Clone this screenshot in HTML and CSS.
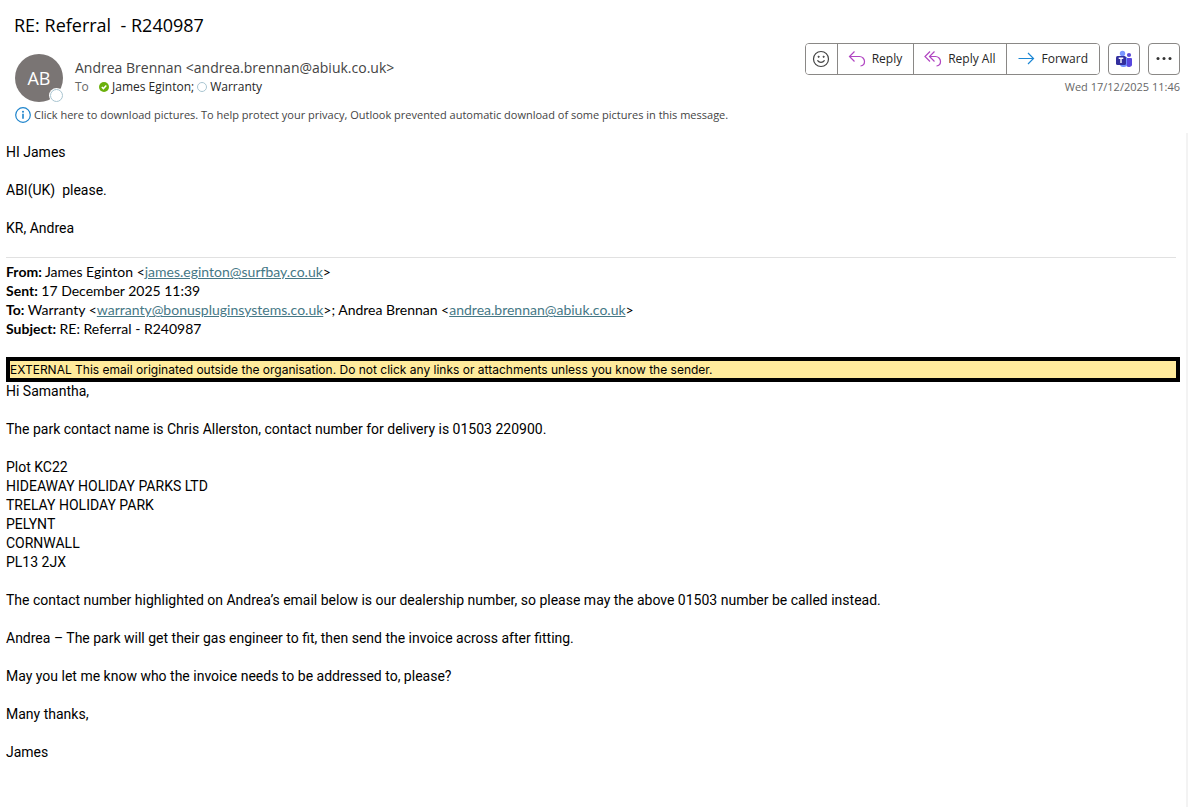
FILE: index.html
```html
<!DOCTYPE html>
<html lang="en-GB">
<head>
<meta charset="utf-8">
<title>RE: Referral - R240987</title>
<link rel="stylesheet" href="styles.css">
</head>
<body>
<main class="message">
  <header class="head">
    <h1 class="subject">RE: Referral&nbsp; - R240987</h1>
    <div class="head-row">
      <div class="avatar">AB<span class="avatar-status"></span></div>
      <div class="people">
        <div class="sender">Andrea Brennan &lt;andrea.brennan@abiuk.co.uk&gt;</div>
        <div class="recipients">
          <span class="to-label">To</span>
          <svg class="presence" viewBox="0 0 10 10" aria-hidden="true"><circle cx="5" cy="5" r="5" fill="#6bb00c"/><path d="M2.8 5l1.6 1.6 2.9-3" fill="none" stroke="#fff" stroke-width="1.5"/></svg>
          <span class="recipient">James Eginton;</span>
          <svg class="presence" viewBox="0 0 10 10" aria-hidden="true"><circle cx="5" cy="5" r="4.5" fill="#fff" stroke="#a9c5d1"/></svg>
          <span class="recipient">Warranty</span>
        </div>
      </div>
      <div class="side">
        <div class="actions">
          <div class="group">
            <button class="btn btn-icon" aria-label="React"><svg width="18" height="18" viewBox="0 0 18 18" fill="none" stroke="#444" stroke-width="1.2" stroke-linecap="round"><circle cx="9" cy="9" r="7.5"/><path d="M5.7 10.7c1.500 2.200 5.100 2.200 6.600 0"/><circle cx="6.500" cy="6.800" r=".6" fill="#444" stroke-width=".8"/><circle cx="11.500" cy="6.800" r=".6" fill="#444" stroke-width=".8"/></svg></button>
            <button class="btn btn-labelled"><svg width="18" height="18" viewBox="0 0 18 18" fill="none" stroke="#b146c2" stroke-width="1.2"><path d="M6.500 1.500L1.500 6.500l5 5M1.500 6.500H11.500a5 5 0 0 1 5 5a4.500 4.500 0 0 1-4 4.500"/></svg>Reply</button>
            <button class="btn btn-labelled"><svg width="18" height="18" viewBox="0 0 18 18" fill="none" stroke="#b146c2" stroke-width="1.2"><path d="M6 1.500L1 6.500l5 5M10.500 1.500L5.500 6.500l5 5M5.500 6.500h6a5 5 0 0 1 5 5a4.500 4.500 0 0 1-4 4.500"/></svg>Reply All</button>
            <button class="btn btn-labelled"><svg width="18" height="18" viewBox="0 0 18 18" fill="none" stroke="#1c87d4" stroke-width="1.2"><path d="M1.500 8.500h15M11 3l5.500 5.500L11 14"/></svg>Forward</button>
          </div>
          <button class="btn btn-square" aria-label="Share to Teams"><svg width="18" height="18" viewBox="0 0 18 18"><circle cx="7.500" cy="3.500" r="2.700" fill="#7b96ff"/><circle cx="14" cy="5" r="2.100" fill="#5b4bd6"/><path d="M11 8h5a1 1 0 0 1 1 1v4.500a3 3 0 0 1-6 1z" fill="#5847df"/><path d="M5 7h7v7a3 3 0 0 1-3 3H8a3 3 0 0 1-3-3z" fill="#6f8cff"/><rect x="1" y="6" width="10" height="9" rx="1.500" fill="#322f9e"/><path d="M3.700 8.300h4.600M6 8.300v4.700" stroke="#fff" stroke-width="1.400"/></svg></button>
          <button class="btn btn-square" aria-label="More actions"><svg width="18" height="18" viewBox="0 0 18 18" fill="#333"><circle cx="3" cy="8.500" r="1.500"/><circle cx="9" cy="8.500" r="1.500"/><circle cx="15" cy="8.500" r="1.500"/></svg></button>
        </div>
        <time class="date" datetime="2025-12-17T11:46">Wed 17/12/2025 11:46</time>
      </div>
    </div>
    <div class="info">
      <svg width="16" height="16" viewBox="0 0 16 16" aria-hidden="true"><circle cx="8" cy="8" r="7.300" fill="none" stroke="#1e84cc" stroke-width="1.200"/><circle cx="8" cy="4.700" r="1" fill="#1e84cc"/><path d="M8 6.800v5" stroke="#1e84cc" stroke-width="1.600"/></svg>
      <span>Click here to download pictures. To help protect your privacy, Outlook prevented automatic download of some pictures in this message.</span>
    </div>
  </header>
  <article class="body">
    <p>HI James</p>
    <p>ABI(UK)&nbsp; please.</p>
    <p>KR, Andrea</p>
    <section class="quoted">
      <p><b>From:</b> James Eginton &lt;<a href="mailto:james.eginton@surfbay.co.uk">james.eginton@surfbay.co.uk</a>&gt;<br>
      <b>Sent:</b> 17 December 2025 11:39<br>
      <b>To:</b> Warranty &lt;<a href="mailto:warranty@bonuspluginsystems.co.uk">warranty@bonuspluginsystems.co.uk</a>&gt;; Andrea Brennan &lt;<a href="mailto:andrea.brennan@abiuk.co.uk">andrea.brennan@abiuk.co.uk</a>&gt;<br>
      <b>Subject:</b> RE: Referral - R240987</p>
    </section>
    <div class="external">EXTERNAL This email originated outside the organisation. Do not click any links or attachments unless you know the sender.</div>
    <p>Hi Samantha,</p>
    <p>The park contact name is Chris Allerston, contact number for delivery is 01503 220900.</p>
    <p>Plot KC22<br>HIDEAWAY HOLIDAY PARKS LTD<br>TRELAY HOLIDAY PARK<br>PELYNT<br>CORNWALL<br>PL13 2JX</p>
    <p>The contact number highlighted on Andrea’s email below is our dealership number, so please may the above 01503 number be called instead.</p>
    <p>Andrea – The park will get their gas engineer to fit, then send the invoice across after fitting.</p>
    <p>May you let me know who the invoice needs to be addressed to, please?</p>
    <p>Many thanks,</p>
    <p>James</p>
  </article>
</main>
</body>
</html>
```
FILE: styles.css
```css
* { box-sizing: border-box; }
body { margin: 0; background: #fff; color: #000; }
.message { display: flex; flex-direction: column; min-height: 100vh; font-family: "Open Sans", sans-serif; }
.head { padding: 12px 8px 0 14px; }
.subject { margin: 0; font-size: 18px; line-height: 26px; font-weight: 400; }
.head-row { display: flex; align-items: flex-start; padding-top: 5px; }
.avatar { position: relative; width: 48px; height: 48px; margin: 11px 12px 0 1px; border-radius: 50%; background: #7a7574; color: #fff; font-size: 18px; line-height: 48px; text-align: center; }
.avatar-status { position: absolute; right: 0; bottom: 0; width: 13px; height: 13px; border: 1px solid #a9c5d1; border-radius: 50%; background: #fff; box-shadow: 0 0 0 1px #fff; }
.people { flex: 1; padding-top: 15px; color: #444; }
.sender { font-size: 14px; line-height: 20px; }
.recipients { display: flex; align-items: center; font-size: 12px; line-height: 18px; }
.to-label { width: 24px; color: #666; }
.presence { width: 10px; height: 10px; margin-right: 3px; }
.recipient { margin-right: 3px; color: #262626; }
.side { display: flex; flex-direction: column; align-items: flex-end; }
.actions { display: flex; gap: 8px; }
.group { display: flex; border: 1px solid #8a8886; border-radius: 4px; }
.btn { display: flex; align-items: center; height: 30px; padding: 0; border: 0; background: #fff; color: #262626; font-family: inherit; font-size: 12px; line-height: 18px; }
.group .btn + .btn { border-left: 1px solid #8a8886; }
.group .btn:first-child { border-radius: 3px 0 0 3px; }
.group .btn:last-child { border-radius: 0 3px 3px 0; }
.btn-icon { width: 31px; justify-content: center; }
.btn-labelled { padding: 0 11px 0 10px; gap: 6px; }
.btn-square { width: 32px; height: 32px; justify-content: center; border: 1px solid #8a8886; border-radius: 4px; }
.date { margin-top: 3px; font-size: 11px; line-height: 18px; color: #666; }
.info { display: flex; align-items: center; gap: 3px; padding: 5px 1px 0; font-size: 11px; line-height: 16px; color: #444; }
.body { flex: 1; margin-top: 10px; padding: 10px 6px 0; border-right: 2px solid #f3f3f3; font-family: Roboto, sans-serif; font-size: 14px; line-height: 19px; }
.body p { margin: 0 0 19px; }
.quoted { margin-right: 4px; padding-top: 4px; border-top: 1px solid #e1e1e1; font-family: Lato, sans-serif; }
.quoted a { color: #467886; }
.external { border: 4px solid #000; background: #ffeb9c; font-family: Inter, sans-serif; font-size: 12px; line-height: 17px; }
```
